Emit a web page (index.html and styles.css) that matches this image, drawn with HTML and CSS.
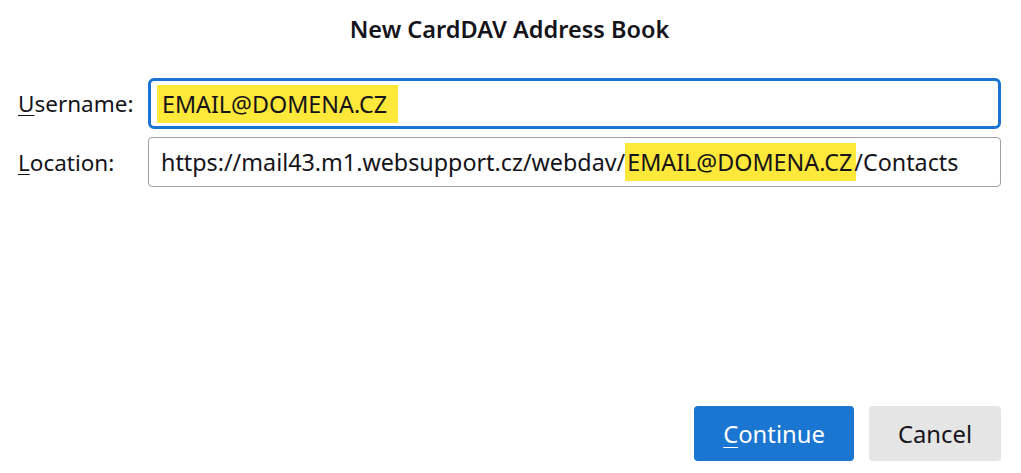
FILE: index.html
```html
<!doctype html>
<html lang="en">
<head>
    <meta charset="UTF-8">
    <title>New CardDAV Address Book</title>
    <link rel="stylesheet" href="styles.css">
</head>
<body>

    <div class="dialog">

        <h1 class="title">New CardDAV Address Book</h1>

        <div class="form">
            <label class="label"><u>U</u>sername:</label>
            <div class="field focused"><span class="mark">EMAIL@DOMENA.CZ</span></div>

            <label class="label"><u>L</u>ocation:</label>
            <div class="field">https://mail43.m1.websupport.cz/webdav/<span class="mark">EMAIL@DOMENA.CZ</span>/Contacts</div>
        </div>

        <div class="buttons">
            <button class="btn primary"><u>C</u>ontinue</button>
            <button class="btn">Cancel</button>
        </div>

    </div>

</body>
</html>
```

FILE: styles.css
```css
html, body{
    margin:0;
    padding:0;
    height: 100%;
    background: #fff;
}
body{
    font-family: "Noto Sans", "Open Sans", sans-serif;
    color: #15141a;
    overflow: hidden;
}
.dialog{
    height: 100%;
    box-sizing: border-box;
    padding: 0 20px 12px 18px;
    display: flex;
    flex-direction: column;
}
.title{
    margin: 13px 0 0;
    font-size: 23.5px;
    font-weight: 600;
    text-align: center;
    line-height: 32px;
}
.form{
    margin-top: 33px;
    display: grid;
    grid-template-columns: 130px 1fr;
    row-gap: 8px;
    align-items: center;
}
.label{
    font-size: 22.5px;
}
.label u{
    text-decoration-thickness: 1px;
    text-underline-offset: 3px;
}
.field{
    height: 50px;
    box-sizing: border-box;
    border: 1px solid #9e9ea3;
    border-radius: 4px;
    padding: 0 12px;
    font-size: 23.3px;
    display: flex;
    align-items: center;
    white-space: nowrap;
    overflow: hidden;
}
.field.focused{
    height: 51px;
    border: 3px solid #1a73d2;
    border-radius: 6px;
    padding-left: 6px;
}
.mark{
    background: #fee83a;
    padding: 3px 4px 3px 2px;
    margin-right: -2px;
}
.field.focused .mark{
    padding: 3px 11px 3px 5px;
    margin: 0;
}
.buttons{
    margin-top: auto;
    display: flex;
    justify-content: flex-end;
    gap: 15px;
}
.btn{
    height: 55px;
    border: none;
    border-radius: 4px;
    background: #e5e5e5;
    color: #15141a;
    font-family: inherit;
    font-size: 23.8px;
    padding: 0 28px;
    min-width: 132px;
}
.btn.primary{
    background: #1b76d2;
    color: #fff;
    min-width: 160px;
}
.btn u{
    text-decoration-thickness: 1px;
    text-underline-offset: 4px;
}
```
